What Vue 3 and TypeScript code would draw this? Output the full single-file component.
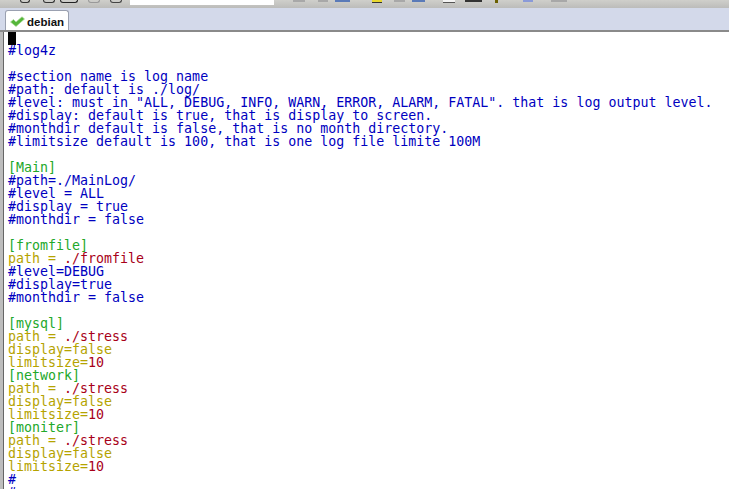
<script setup lang="ts">
type Seg = { t: string; c: string }
const B = 'blue', G = 'green', K = 'key', R = 'red'
const c = (t: string): Seg[] => [{ t, c: B }]
const g = (t: string): Seg[] => [{ t, c: G }]
const pathLine = (v: string): Seg[] => [{ t: 'path = ', c: K }, { t: v, c: R }]
const block = (name: string): Seg[][] => [
  g(`[${name}]`),
  pathLine('./stress'),
  [{ t: 'display=false', c: K }],
  [{ t: 'limitsize=', c: K }, { t: '10', c: R }],
]
const lines: Seg[][] = [
  c('#log4z'),
  [],
  c('#section name is log name'),
  c('#path: default is ./log/'),
  c('#level: must in "ALL, DEBUG, INFO, WARN, ERROR, ALARM, FATAL". that is log output level.'),
  c('#display: default is true, that is display to screen.'),
  c('#monthdir default is false, that is no month directory.'),
  c('#limitsize default is 100, that is one log file limite 100M'),
  [],
  g('[Main]'),
  c('#path=./MainLog/'),
  c('#level = ALL'),
  c('#display = true'),
  c('#monthdir = false'),
  [],
  g('[fromfile]'),
  pathLine('./fromfile'),
  c('#level=DEBUG'),
  c('#display=true'),
  c('#monthdir = false'),
  [],
  ...block('mysql'),
  ...block('network'),
  ...block('moniter'),
  c('#'),
  c('#'),
]
const icons = [
  { id: 'a', gap: 20, w: 10, col: '#333' },
  { id: 'b', gap: 13, w: 12, col: '#333' },
  { id: 'c', gap: 5, w: 18, col: '#222' },
  { id: 'd', gap: 10, w: 12, col: '#999' },
  { id: 'e', gap: 10, w: 12, col: '#444' },
]
const flats = [
  { id: 1, x: 293, w: 12, k: 'tb-gray' },
  { id: 2, x: 318, w: 10, k: 'tb-gray' },
  { id: 3, x: 335, w: 15, k: 'tb-blue' },
  { id: 4, x: 372, w: 10, k: 'tb-yellow' },
  { id: 5, x: 394, w: 11, k: 'tb-gray' },
  { id: 6, x: 412, w: 13, k: 'tb-blue' },
  { id: 7, x: 443, w: 12, k: 'tb-white' },
  { id: 8, x: 465, w: 17, k: 'tb-dark' },
  { id: 9, x: 495, w: 3, k: 'tb-olive' },
  { id: 10, x: 523, w: 10, k: 'tb-ring' },
  { id: 11, x: 551, w: 16, k: 'tb-gray' },
]
const gapBefore = (i: number): number =>
  i === 0 ? flats[0].x - 274 : flats[i].x - flats[i - 1].x - flats[i - 1].w
</script>

<template>
  <div class="app">
    <div class="toolbar">
      <div class="icons">
        <span v-for="ic in icons" :key="ic.id" class="glyph" :style="{ marginLeft: ic.gap + 'px', width: ic.w + 'px', borderColor: ic.col }"></span>
      </div>
      <div class="search"></div>
      <span
        v-for="(f, i) in flats"
        :key="f.id"
        class="flat"
        :class="f.k"
        :style="{ marginLeft: gapBefore(i) + 'px', width: f.w + 'px' }"
      ></span>
    </div>
    <div class="tabbar">
      <div class="tab">
        <svg class="check" width="15" height="12" viewBox="0 0 15 12">
          <path d="M0.5 6 L3.5 3.5 L6 6 L12 0.8 L14.5 3 L6 10.5 Z" fill="#55b63a" stroke="#a6d893" stroke-width="0.7" />
        </svg>
        <span>debian</span>
      </div>
    </div>
    <div class="editor">
      <div class="cursor-line"><span class="cursor"></span></div>
      <div v-for="(line, i) in lines" :key="i" class="line">
        <span v-for="(s, j) in line" :key="j" :class="s.c">{{ s.t }}</span>
      </div>
    </div>
  </div>
</template>

<style scoped>
.app {
  width: 729px;
  height: 489px;
  display: flex;
  flex-direction: column;
  overflow: hidden;
  background: #fff;
}
.toolbar {
  height: 8px;
  flex: none;
  background: linear-gradient(#cfcfcb, #bcbcba);
  display: flex;
  align-items: flex-start;
}
.icons { display: flex; width: 130px; flex: none; }
.glyph {
  height: 3px;
  box-sizing: border-box;
  border: 1px solid #333;
  border-top: none;
  border-radius: 0 0 4px 4px;
}
.search {
  width: 144px;
  height: 5px;
  flex: none;
  background: #fff;
}
.flat { height: 2px; display: block; flex: none; }
.tb-gray { background: #a8a8a8; }
.tb-blue { background: #5a7ab8; }
.tb-yellow { background: #e8d830; box-shadow: 0 1px 0 #333; }
.tb-white { background: #f4f4f4; box-shadow: 0 1px 0 #555; }
.tb-dark { background: #333; }
.tb-olive { height: 3px; background: #6b6000; }
.tb-ring { background: #8a9ad8; }
.tabbar {
  height: 22px;
  flex: none;
  background: #d3d9ea;
  display: flex;
  align-items: flex-end;
  padding-left: 5px;
  border-bottom: 2px solid #8a8a8a;
}
.tab {
  width: 64px;
  height: 20px;
  box-sizing: border-box;
  background: #fff;
  border: 1px solid #9aa0b0;
  border-bottom: none;
  border-radius: 3px 3px 0 0;
  display: flex;
  align-items: center;
  gap: 2px;
  padding: 2px 0 0 4px;
  font: bold 11.5px "Liberation Sans", sans-serif;
  color: #111;
}
.editor {
  flex: 1;
  min-height: 0;
  overflow: hidden;
  border-left: 3px solid #bdbdbd;
  box-shadow: inset 1px 0 0 #666;
  padding-left: 5px;
  font: 13.3px/13px "DejaVu Sans Mono", monospace;
  white-space: pre;
}
.cursor-line { height: 12px; }
.cursor { display: block; width: 8px; height: 13px; background: #000; }
.line { height: 13px; display: flex; }
.line span { display: block; line-height: 13px; }
.blue { color: #0000c0; }
.green { color: #22a82a; }
.key { color: #b5a300; }
.red { color: #a80018; }
</style>
